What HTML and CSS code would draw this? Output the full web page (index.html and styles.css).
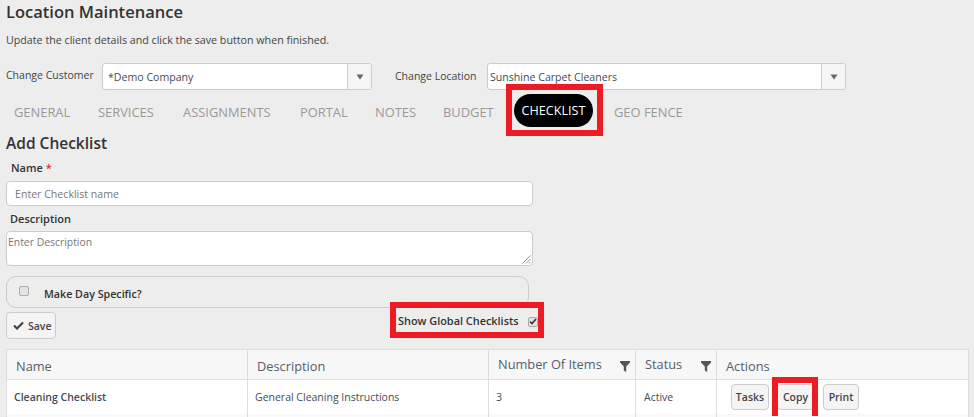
FILE: index.html
```html
<!DOCTYPE html>
<html lang="en">
<head>
<meta charset="utf-8">
<title>Location Maintenance</title>
<link rel="stylesheet" href="styles.css">
</head>
<body>
<main class="page">
  <h1 class="title">Location Maintenance</h1>
  <p class="intro">Update the client details and click the save button when finished.</p>
  <div class="pickers">
    <label class="picker-label picker-label-a">Change Customer</label>
    <div class="combo combo-a"><span class="combo-text">*Demo Company</span><span class="combo-btn"><svg width="8" height="6" viewBox="0 0 8 6"><path d="M0.5 0.5h7L4 5.5z" fill="#666"/></svg></span></div>
    <label class="picker-label picker-label-b">Change Location</label>
    <div class="combo combo-b"><span class="combo-text">Sunshine Carpet Cleaners</span><span class="combo-btn"><svg width="8" height="6" viewBox="0 0 8 6"><path d="M0.5 0.5h7L4 5.5z" fill="#666"/></svg></span></div>
  </div>
  <nav class="tabs">
    <a class="tab t1">GENERAL</a>
    <a class="tab t2">SERVICES</a>
    <a class="tab t3">ASSIGNMENTS</a>
    <a class="tab t4">PORTAL</a>
    <a class="tab t5">NOTES</a>
    <a class="tab t6">BUDGET</a>
    <a class="tab-active">CHECKLIST<span class="mark mark-tab"></span></a>
    <a class="tab t8">GEO FENCE</a>
  </nav>
  <h2 class="section">Add Checklist</h2>
  <div class="field-label name-label">Name <span class="req">*</span></div>
  <div class="input">Enter Checklist name</div>
  <div class="field-label desc-label">Description</div>
  <div class="textarea">Enter Description
    <svg class="grip" width="9" height="9" viewBox="0 0 9 9"><path d="M0.5 8.5L8.5 0.5M4 8.5L8.5 4M7 8.5L8.5 7" stroke="#777" stroke-width="0.8" fill="none"/></svg>
  </div>
  <div class="day-panel"><span class="check"></span><span class="day-text">Make Day Specific?</span></div>
  <div class="actions-row">
    <button class="btn save"><svg width="11" height="9" viewBox="0 0 11 9"><path d="M1 4.5l3 3 6-6" stroke="#444" stroke-width="2.2" fill="none"/></svg>Save</button>
    <div class="global">Show Global Checklists<span class="check check-on"><svg width="8" height="7" viewBox="0 0 8 7"><path d="M1 3.5l2 2 4-4.5" stroke="#333" stroke-width="1.6" fill="none"/></svg></span></div>
  </div>
  <div class="table">
    <div class="cell head">Name</div>
    <div class="cell head">Description</div>
    <div class="cell head head-up">Number Of Items<svg class="funnel" width="10" height="11" viewBox="0 0 10 11"><path d="M0 0h10v1.5L6.2 5.5V11L3.8 9.5V5.5L0 1.5z" fill="#555"/></svg></div>
    <div class="cell head head-up">Status<svg class="funnel" width="10" height="11" viewBox="0 0 10 11"><path d="M0 0h10v1.5L6.2 5.5V11L3.8 9.5V5.5L0 1.5z" fill="#555"/></svg></div>
    <div class="cell head head-last">Actions</div>
    <div class="cell row strong">Cleaning Checklist</div>
    <div class="cell row">General Cleaning Instructions</div>
    <div class="cell row">3</div>
    <div class="cell row status">Active</div>
    <div class="cell row row-last btns">
      <button class="btn small tasks">Tasks</button>
      <button class="btn small copy">Copy<span class="mark mark-copy"></span></button>
      <button class="btn small print">Print</button>
    </div>
    <div class="cell stripe"></div>
    <div class="cell stripe"></div>
    <div class="cell stripe"></div>
    <div class="cell stripe"></div>
    <div class="cell stripe row-last"></div>
  </div>
</main>
</body>
</html>
```
FILE: styles.css
```css
* { box-sizing: border-box; }
html, body { margin: 0; height: 417px; overflow: hidden; }
body { background: #ededed; font-family: "Open Sans", "Liberation Sans", sans-serif; color: #444b55; }
.page { padding: 0 5px 0 6px; }
.title { margin: 0; padding-top: 1px; height: 24px; font-size: 16.5px; line-height: 22px; font-weight: 600; color: #333; }
.intro { margin: 0; padding-top: 9px; height: 39px; font-size: 10.7px; line-height: 14px; color: #444; }
.pickers { display: flex; align-items: center; height: 27px; }
.picker-label { font-size: 10.5px; color: #444; white-space: nowrap; }
.picker-label-a { width: 96px; padding-bottom: 4px; }
.picker-label-b { width: 92px; margin-left: 23px; padding-bottom: 2px; }
.combo { display: flex; height: 27px; background: #fff; border: 1px solid #ccc; border-radius: 3px; }
.combo-a { width: 270px; }
.combo-b { width: 359px; }
.combo-text { flex: 1; padding: 6px 0 0 2px; font-size: 10.6px; line-height: 14px; color: #444b55; }
.combo-a .combo-text { padding-left: 5px; }
.combo-btn { width: 24px; display: flex; align-items: center; justify-content: center; background: #f5f5f5; border-left: 1px solid #ccc; border-radius: 0 3px 3px 0; }
.tabs { display: flex; align-items: center; height: 41px; padding-left: 8px; }
.tab { font-size: 12.9px; line-height: 16px; padding-top: 3px; color: #999; white-space: nowrap; }
.t1 { width: 84px; }
.t2 { width: 85px; }
.t3 { width: 117px; }
.t4 { width: 75px; }
.t5 { width: 68px; }
.t6 { width: 65px; }
.tab-active { position: relative; display: flex; align-items: center; justify-content: center; width: 79px; height: 33px; margin-left: 6px; background: #000; color: #fff; border-radius: 17px; font-size: 12.6px; white-space: nowrap; }
.t8 { margin-left: 21px; }
.mark { position: absolute; border: 6px solid #ed1c24; pointer-events: none; }
.mark-tab { inset: -10px -10px -9px -8px; }
.section { margin: 0; height: 29px; padding-top: 2px; font-size: 15.5px; line-height: 20px; font-weight: 600; color: #333; }
.field-label { font-size: 11px; line-height: 15px; font-weight: 600; color: #333; padding-left: 5px; }
.name-label { height: 21px; }
.req { color: #e22; }
.input { width: 527px; height: 25px; background: #fff; border: 1px solid #ccc; border-radius: 4px; padding: 5px 8px; font-size: 10.6px; line-height: 14px; color: #777; }
.desc-label { padding-top: 5px; height: 25px; padding-left: 4px; }
.textarea { position: relative; width: 527px; height: 35px; background: #fff; border: 1px solid #ccc; border-radius: 4px; padding: 3px 1px; font-size: 10.4px; line-height: 14px; color: #777; }
.grip { position: absolute; right: 1px; bottom: 1px; }
.day-panel { display: flex; width: 523px; height: 32px; margin-top: 10px; border: 1px solid #ccc; border-radius: 10px; }
.check { display: inline-flex; align-items: center; justify-content: center; width: 10px; height: 10px; background: #e4e4e4; border: 1px solid #aaa; border-radius: 2px; }
.day-panel .check { margin: 9px 0 0 12px; }
.day-text { margin-left: 15px; padding-top: 10px; font-size: 10.7px; line-height: 14px; font-weight: 600; color: #333; }
.actions-row { display: flex; justify-content: space-between; width: 538px; height: 41px; }
.btn { display: inline-flex; align-items: center; font-family: inherit; background: #f4f4f4; border: 1px solid #ccc; border-radius: 4px; color: #444; font-weight: 600; }
.save { gap: 4px; width: 50px; height: 27px; margin-top: 4px; padding: 0 0 0 6px; font-size: 10.5px; }
.global { display: flex; align-items: center; height: 36px; margin-top: -6px; width: 154px; padding-left: 2px; border: 6px solid #ed1c24; font-size: 10.9px; font-weight: 600; color: #333; white-space: nowrap; }
.global .check { margin: 3px 0 0 9px; flex: none; }
.table { display: grid; grid-template-columns: 241px 241px 147px 81px 1fr; grid-template-rows: 30px 34px 3px; border: 1px solid #ddd; border-bottom: 0; background: #fff; }
.cell { border-right: 1px solid #ddd; display: flex; align-items: center; }
.head { position: relative; background: #f7f7f7; border-bottom: 1px solid #ddd; padding: 3px 9px 0; font-size: 12.8px; color: #55606c; }
.head-up { padding-top: 0; padding-bottom: 2px; }
.funnel { position: absolute; right: 5px; top: 11px; }
.head-last, .row-last { border-right: 0; }
.row { padding: 0 7px; font-size: 10.5px; color: #444b55; }
.status { padding-left: 8px; }
.strong { font-weight: 600; }
.stripe { background: #f9f9f9; }
.btns { padding: 0 0 0 14px; gap: 8px; }
.small { justify-content: center; position: relative; height: 26px; padding: 0; font-size: 10.5px; }
.tasks { width: 38px; }
.copy { width: 37px; }
.print { width: 36px; margin-left: 1px; }
.mark-copy { inset: -8px -5px -7px -6px; border-bottom: 0; }
```
